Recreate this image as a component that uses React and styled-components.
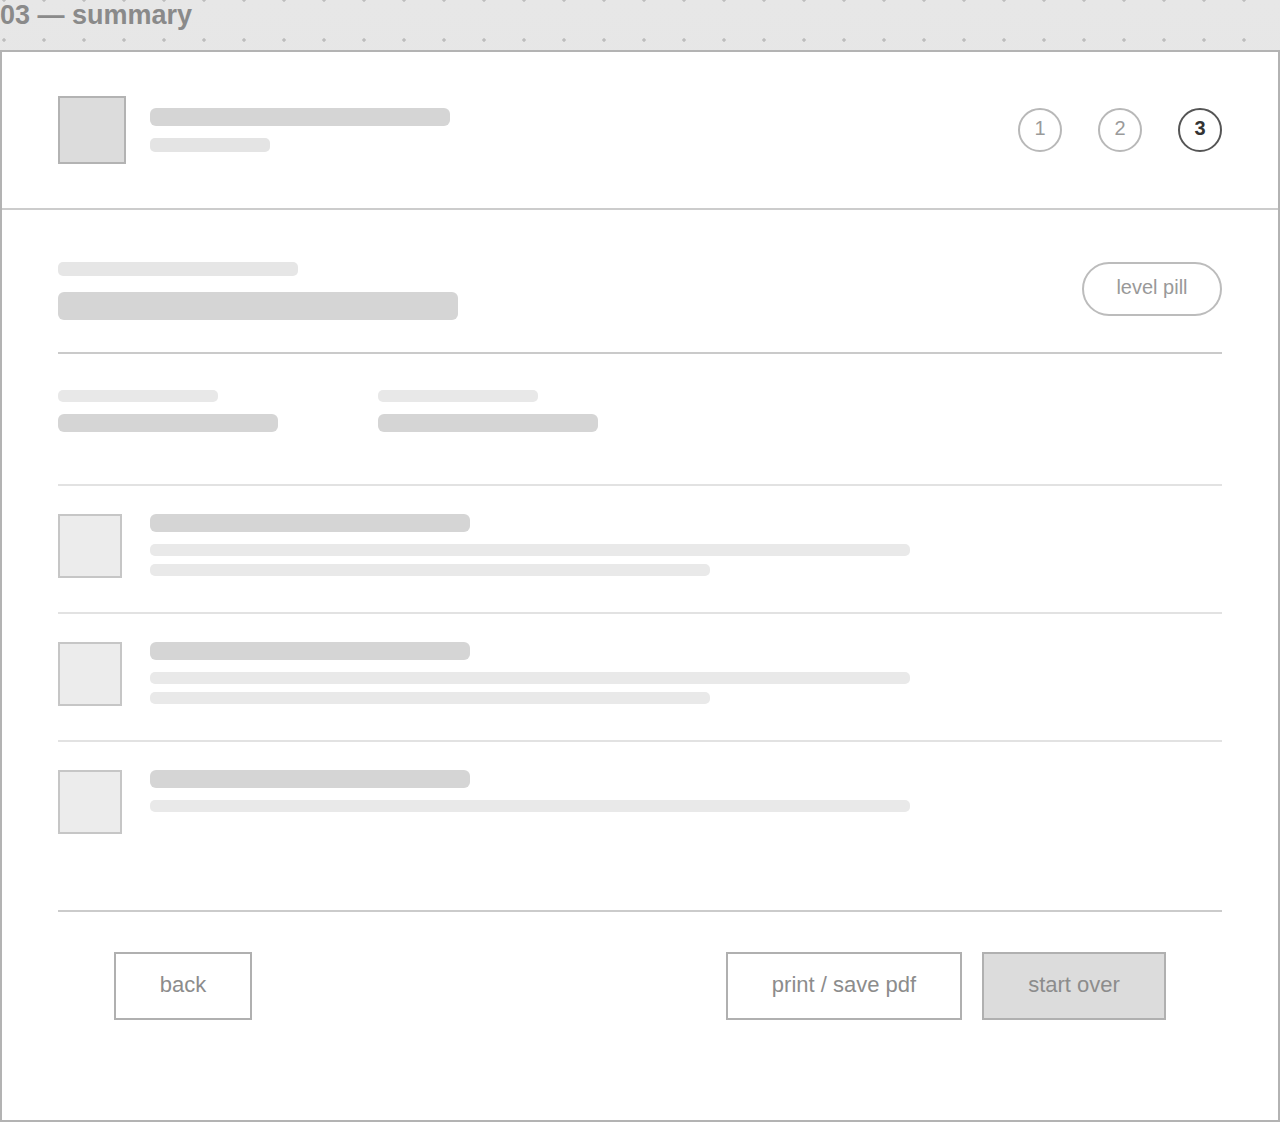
import styled, { createGlobalStyle } from "styled-components";

const Global = createGlobalStyle`
  html, body {
    margin: 0;
    padding: 0;
    font-family: "Liberation Sans", Arial, sans-serif;
  }
  body {
    background-color: #e2e2e2;
  }
  * { box-sizing: border-box; }
`

const Page = styled.div`
  width: 1280px;
  height: 1122px;
  display: flex;
  flex-direction: column;
  background-image:
    radial-gradient(circle, #bdbdbd 0, #bdbdbd 1.4px, transparent 2px),
    linear-gradient(#e7e7e7, #dddddd);
  background-size: 40px 40px, 100% 100%;
  background-position: -16px -20px, 0 0;
`

const Strip = styled.div`
  height: 50px;
  flex-shrink: 0;
`

const FrameTitle = styled.div`
  font-size: 27px;
  font-weight: bold;
  color: #8a8a8a;
  line-height: 30px;
`

const Panel = styled.div`
  flex: 1;
  background: #ffffff;
  border: 2px solid #b3b3b3;
  display: flex;
  flex-direction: column;
`

const Header = styled.div`
  display: flex;
  align-items: center;
  justify-content: space-between;
  padding: 44px 56px;
  border-bottom: 2px solid #cccccc;
`

const Brand = styled.div`
  display: flex;
  align-items: flex-start;
  gap: 24px;
`

const Logo = styled.div`
  width: 68px;
  height: 68px;
  background: #dcdcdc;
  border: 2px solid #b3b3b3;
`

const BrandText = styled.div`
  display: flex;
  flex-direction: column;
  gap: 12px;
  padding-top: 12px;
`

const Bar = styled.div`
  width: ${p => p.$w}px;
  height: ${p => p.$h}px;
  background: ${p => p.$c || "#d5d5d5"};
  border-radius: ${p => (p.$h >= 18 ? 6 : 5)}px;
`

const Steps = styled.div`
  display: flex;
  gap: 36px;
`

const Step = styled.div`
  width: 44px;
  height: 44px;
  border-radius: 50%;
  border: 2px solid ${p => (p.$active ? "#555555" : "#b8b8b8")};
  color: ${p => (p.$active ? "#333333" : "#9a9a9a")};
  font-weight: ${p => (p.$active ? "bold" : "normal")};
  font-size: 20px;
  display: flex;
  align-items: center;
  justify-content: center;
  padding-bottom: 3px;
`

const Body = styled.div`
  flex: 1;
  padding: 52px 56px 0;
  display: flex;
  flex-direction: column;
`

const SummaryHead = styled.div`
  display: flex;
  justify-content: space-between;
  align-items: flex-start;
  padding-bottom: 32px;
  border-bottom: 2px solid #cacaca;
`

const HeadText = styled.div`
  display: flex;
  flex-direction: column;
  gap: 16px;
`

const Pill = styled.div`
  width: 140px;
  height: 54px;
  border: 2px solid #bcbcbc;
  border-radius: 27px;
  display: flex;
  align-items: center;
  justify-content: center;
  font-size: 20px;
  color: #999999;
  padding-bottom: 4px;
`

const Meta = styled.div`
  display: grid;
  grid-template-columns: 320px 320px;
  padding: 36px 0 52px;
  border-bottom: 2px solid #e2e2e2;
`

const MetaItem = styled.div`
  display: flex;
  flex-direction: column;
  gap: 12px;
`

const Row = styled.div`
  display: flex;
  align-items: flex-start;
  gap: 28px;
  padding: 28px 0 ${p => (p.$last ? 76 : 34)}px;
  border-bottom: 2px solid ${p => (p.$last ? "#cbcbcb" : "#e2e2e2")};
`

const RowIcon = styled.div`
  width: 64px;
  height: 64px;
  background: #ececec;
  border: 2px solid #c6c6c6;
  flex-shrink: 0;
`

const RowText = styled.div`
  display: flex;
  flex-direction: column;
`

const Lines = styled.div`
  display: flex;
  flex-direction: column;
  gap: 8px;
  margin-top: 12px;
`

const Footer = styled.div`
  display: flex;
  align-items: center;
  padding: 40px 56px 100px;
`

const Button = styled.div`
  width: ${p => p.$w}px;
  height: 68px;
  border: 2px solid #b0b0b0;
  background: ${p => (p.$filled ? "#dcdcdc" : "#ffffff")};
  color: #8c8c8c;
  font-size: 22px;
  display: flex;
  align-items: center;
  justify-content: center;
  padding-bottom: 2px;
`

const Spacer = styled.div`
  flex: 1;
`

const FooterRight = styled.div`
  display: flex;
  gap: 20px;
`

const rows = [
  { lines: [760, 560] },
  { lines: [760, 560] },
  { lines: [760] },
]

export default function App() {
  return (
    <>
      <Global />
      <Page>
        <Strip>
          <FrameTitle>03 — summary</FrameTitle>
        </Strip>
        <Panel>
          <Header>
            <Brand>
              <Logo />
              <BrandText>
                <Bar $w={300} $h={18} />
                <Bar $w={120} $h={14} $c="#e4e4e4" />
              </BrandText>
            </Brand>
            <Steps>
              <Step>1</Step>
              <Step>2</Step>
              <Step $active>3</Step>
            </Steps>
          </Header>
          <Body>
            <SummaryHead>
              <HeadText>
                <Bar $w={240} $h={14} $c="#e6e6e6" />
                <Bar $w={400} $h={28} />
              </HeadText>
              <Pill>level pill</Pill>
            </SummaryHead>
            <Meta>
              <MetaItem>
                <Bar $w={160} $h={12} $c="#e8e8e8" />
                <Bar $w={220} $h={18} />
              </MetaItem>
              <MetaItem>
                <Bar $w={160} $h={12} $c="#e8e8e8" />
                <Bar $w={220} $h={18} />
              </MetaItem>
            </Meta>
            {rows.map((r, i) => (
              <Row key={i} $last={i === rows.length - 1}>
                <RowIcon />
                <RowText>
                  <Bar $w={320} $h={18} />
                  <Lines>
                    {r.lines.map((w, j) => (
                      <Bar key={j} $w={w} $h={12} $c="#e9e9e9" />
                    ))}
                  </Lines>
                </RowText>
              </Row>
            ))}
            <Footer>
              <Button $w={138}>back</Button>
              <Spacer />
              <FooterRight>
                <Button $w={236}>print / save pdf</Button>
                <Button $w={184} $filled>start over</Button>
              </FooterRight>
            </Footer>
          </Body>
        </Panel>
      </Page>
    </>
  )
}
